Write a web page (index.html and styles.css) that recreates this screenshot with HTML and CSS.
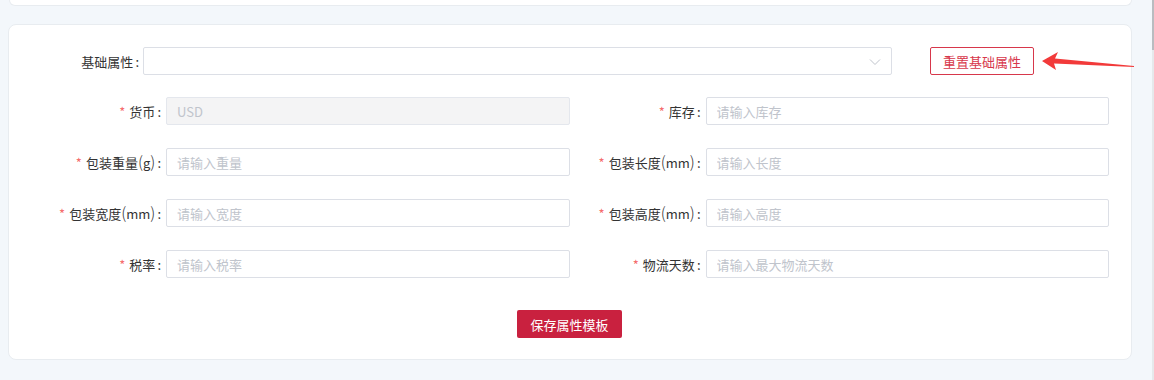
FILE: index.html
```html
<!DOCTYPE html>
<html lang="zh-CN">
<head>
  <meta charset="UTF-8">
  <title>属性模板</title>
  <link rel="stylesheet" href="styles.css">
</head>
<body>

<div class="top-card"></div>

<div class="card">
  <div class="base-row">
    <label class="base-label">基础属性<span class="colon">:</span></label>
    <div class="select">
      <svg class="chevron" width="12" height="8" viewBox="0 0 12 8"><path d="M1 1.5 L6 6.5 L11 1.5" fill="none" stroke="#c0c4cc" stroke-width="1"/></svg>
    </div>
    <button type="button" class="reset-btn">重置基础属性</button>
    <svg class="arrow" width="94" height="22" viewBox="0 0 94 22">
      <path d="M0 10 L16 1 L13 7.5 L92 15 L92 16 L12 12.5 L14 19 Z" fill="#f23a3a"/>
    </svg>
  </div>

  <div class="grid">
    <div class="item">
      <label><span class="req">*</span>货币<span class="colon">:</span></label>
      <input type="text" class="input disabled" value="USD" disabled>
    </div>
    <div class="item">
      <label><span class="req">*</span>库存<span class="colon">:</span></label>
      <input type="text" class="input" placeholder="请输入库存">
    </div>
    <div class="item">
      <label><span class="req">*</span>包装重量<span class="paren">(</span>g<span class="paren">)</span><span class="colon">:</span></label>
      <input type="text" class="input" placeholder="请输入重量">
    </div>
    <div class="item">
      <label><span class="req">*</span>包装长度<span class="paren">(</span>mm<span class="paren">)</span><span class="colon">:</span></label>
      <input type="text" class="input" placeholder="请输入长度">
    </div>
    <div class="item">
      <label><span class="req">*</span>包装宽度<span class="paren">(</span>mm<span class="paren">)</span><span class="colon">:</span></label>
      <input type="text" class="input" placeholder="请输入宽度">
    </div>
    <div class="item">
      <label><span class="req">*</span>包装高度<span class="paren">(</span>mm<span class="paren">)</span><span class="colon">:</span></label>
      <input type="text" class="input" placeholder="请输入高度">
    </div>
    <div class="item">
      <label><span class="req">*</span>税率<span class="colon">:</span></label>
      <input type="text" class="input" placeholder="请输入税率">
    </div>
    <div class="item">
      <label><span class="req">*</span>物流天数<span class="colon">:</span></label>
      <input type="text" class="input" placeholder="请输入最大物流天数">
    </div>
  </div>

  <div class="actions">
    <button type="button" class="save-btn">保存属性模板</button>
  </div>
</div>

<div class="scrollbar"><div class="thumb"></div></div>

</body>
</html>
```

FILE: styles.css
```css
body {
  margin: 0;
  background: #f3f7fb;
  font-family: "Microsoft YaHei", "Noto Sans CJK SC", sans-serif;
  font-size: 13px;
  color: #333;
  height: 380px;
  overflow: hidden;
}
.top-card {
  margin: 0 22px 0 9px;
  height: 5px;
  background: #fff;
  border: 1px solid #e8ecf0;
  border-top: none;
  border-radius: 0 0 8px 8px;
}
.card {
  margin: 18px 22px 0 8px;
  padding: 22px 22px 21px 21px;
  background: #fff;
  border: 1px solid #e8ecf0;
  border-radius: 8px;
}
.base-row {
  position: relative;
  display: flex;
  align-items: center;
  height: 28px;
}
.base-label {
  width: 113px;
  padding-right: 4px;
  box-sizing: border-box;
  text-align: right;
}
.colon {
  margin-left: 2px;
}
.paren {
  font-size: 16px;
  line-height: 1;
  font-weight: 300;
}
.select {
  position: relative;
  width: 749px;
  height: 28px;
  box-sizing: border-box;
  border: 1px solid #dcdfe6;
  border-radius: 2px;
}
.chevron {
  position: absolute;
  right: 10px;
  top: 10px;
}
.reset-btn {
  margin-left: 38px;
  width: 104px;
  height: 28px;
  background: #fff;
  border: 1px solid #d7374b;
  border-radius: 2px;
  color: #d7374b;
  font-family: inherit;
  font-size: 13px;
  padding: 0;
}
.arrow {
  position: absolute;
  left: 1012px;
  top: 4px;
}
.grid {
  display: grid;
  grid-template-columns: 1fr 1fr;
  row-gap: 23px;
  margin-top: 22px;
}
.item {
  display: flex;
  align-items: center;
  height: 28px;
}
.item label {
  width: 136px;
  flex-shrink: 0;
  padding-right: 5px;
  box-sizing: border-box;
  text-align: right;
  white-space: nowrap;
}
.req {
  color: #f56c6c;
  margin-right: 4px;
}
.input {
  flex: 1;
  min-width: 0;
  height: 28px;
  box-sizing: border-box;
  border: 1px solid #dcdfe6;
  border-radius: 2px;
  padding: 0 10px;
  font-family: inherit;
  font-size: 13px;
  color: #333;
  outline: none;
}
.input::placeholder {
  color: #c0c4cc;
}
.input.disabled {
  background: #f4f4f5;
  border-color: #e4e7ed;
  color: #c0c4cc;
}
.actions {
  display: flex;
  justify-content: center;
  margin-top: 32px;
}
.save-btn {
  width: 105px;
  height: 28px;
  background: #c9213f;
  border: none;
  border-radius: 2px;
  color: #fff;
  font-family: inherit;
  font-size: 13px;
  padding: 0;
}
.scrollbar {
  position: fixed;
  right: 0;
  top: 0;
  width: 2px;
  height: 380px;
  background: #e6e8eb;
}
.thumb {
  height: 50px;
  background: #b9bcc0;
}
```
